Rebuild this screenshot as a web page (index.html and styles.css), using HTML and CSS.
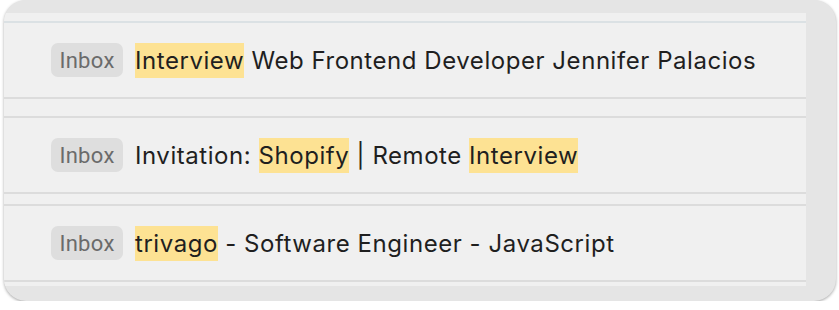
FILE: index.html
```html
<!DOCTYPE html>
<html>
<head>
    <title>Search results</title>
    <link rel="stylesheet" href="styles.css">
</head>
<body>
    <div class="card">
        <div class="panel">
            <div class="row first">
                <span class="badge">Inbox</span>
                <p class="subject"><span class="hl">Interview</span> Web Frontend Developer Jennifer Palacios</p>
            </div>
            <div class="row second">
                <span class="badge">Inbox</span>
                <p class="subject">Invitation: <span class="hl">Shopify</span> | Remote <span class="hl">Interview</span></p>
            </div>
            <div class="row third">
                <span class="badge">Inbox</span>
                <p class="subject"><span class="hl">trivago</span> - Software Engineer - JavaScript</p>
            </div>
        </div>
    </div>
</body>
</html>
```

FILE: styles.css
```css
body {
    margin: 0;
    padding: 0 3px 0 4px;
    font-family: 'Inter', sans-serif;
    background: #fff;
    color: #1f1f1f;
    overflow: hidden;
}

.card {
    height: 301px;
    background: #e5e5e5;
    border-radius: 22px;
    box-shadow: 0 1px 3px rgba(0, 0, 0, 0.35);
    overflow: hidden;
    padding-top: 13px;
    box-sizing: border-box;
}

.panel {
    width: 802px;
    height: 273px;
    background: #f0f0f0;
    padding-top: 8px;
    box-sizing: border-box;
}

.row {
    display: flex;
    align-items: center;
    gap: 12px;
    height: 78px;
    box-sizing: border-box;
    padding-left: 47px;
    border-top: 2px solid #dcdcdc;
    border-bottom: 2px solid #dcdcdc;
}

.row.first {
    border-top-color: #dbe1e4;
}

.row.second {
    margin-top: 17px;
}

.row.third {
    margin-top: 10px;
}

.badge {
    display: inline-flex;
    align-items: center;
    justify-content: center;
    width: 72px;
    height: 34px;
    border-radius: 7px;
    background: #dedede;
    color: #6b6b6b;
    font-family: 'Roboto', sans-serif;
    font-size: 22px;
    letter-spacing: 0.3px;
}

.subject {
    margin: 0;
    font-size: 24px;
    letter-spacing: 0.55px;
    white-space: nowrap;
}

.hl {
    background: #fde293;
    padding: 3px 0;
}
```
